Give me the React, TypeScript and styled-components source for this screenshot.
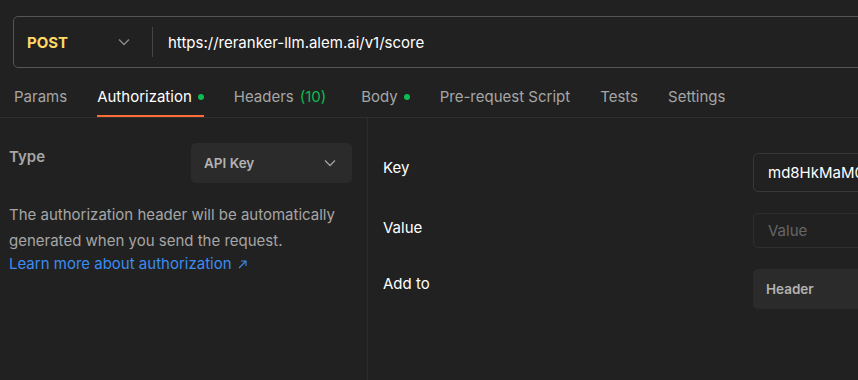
import React from "react";
import styled, { createGlobalStyle } from "styled-components";

const GlobalStyle = createGlobalStyle`
  html, body {
    margin: 0;
    padding: 0;
    background: #212121;
  }
  * {
    box-sizing: border-box;
  }
`;

const Page = styled.div`
  width: 858px;
  height: 380px;
  overflow: hidden;
  background: #212121;
  font-family: Inter, "Noto Sans", sans-serif;
  font-size: 15px;
  color: #f0f0f0;
  display: flex;
  flex-direction: column;
`;

const UrlBar = styled.div`
  margin: 16px -40px 0 13px;
  height: 52px;
  border: 1px solid #555555;
  border-radius: 5px;
  display: flex;
  align-items: center;
  flex-shrink: 0;
`;

const Method = styled.div`
  width: 138px;
  padding: 0 22px 0 13px;
  display: flex;
  align-items: center;
  justify-content: space-between;
  font-weight: 700;
  color: #ffd866;
`;

const Divider = styled.div`
  width: 1px;
  height: 30px;
  background: #454545;
`;

const UrlText = styled.div`
  padding-left: 15px;
  color: #ffffff;
  white-space: nowrap;
`;

const Chevron: React.FC<{ color?: string }> = ({ color = "#8c8c8c" }) => (
  <svg width="12" height="8" viewBox="0 0 12 8" fill="none">
    <path d="M1 1.5 L6 6.5 L11 1.5" stroke={color} strokeWidth="1.3" />
  </svg>
);

const TabBar = styled.div`
  display: flex;
  gap: 30px;
  padding-left: 14px;
  border-bottom: 1px solid #2f2f2f;
  flex-shrink: 0;
`;

const Tab = styled.div<{ $active?: boolean; $extra?: number }>`
  padding: 19px 0 8px;
  line-height: 20px;
  display: flex;
  align-items: center;
  gap: 6px;
  white-space: nowrap;
  color: ${(p) => (p.$active ? "#ffffff" : "#a6a6a6")};
  border-bottom: 2px solid ${(p) => (p.$active ? "#ff6c37" : "transparent")};
  margin-right: ${(p) => p.$extra ?? 0}px;
`;

const Count = styled.span`
  color: #0cbb52;
`;

const Dot = styled.span`
  width: 6px;
  height: 6px;
  border-radius: 50%;
  background: #0cbb52;
`;

const Body = styled.div`
  flex: 1;
  display: grid;
  grid-template-columns: 368px 1fr;
  min-height: 0;
`;

const LeftPane = styled.div`
  border-right: 1px solid #2c2c2c;
  padding: 25px 15px 0 9px;
`;

const TypeRow = styled.div`
  display: flex;
  justify-content: space-between;
  align-items: flex-start;
`;

const TypeLabel = styled.div`
  padding-top: 4px;
  font-weight: 600;
  color: #a6a6a6;
  line-height: 20px;
`;

const Select = styled.div<{ $width: number; $height?: number }>`
  width: ${(p) => p.$width}px;
  height: ${(p) => p.$height ?? 40}px;
  background: #2b2b2b;
  border-radius: 5px;
  padding: 0 16px 0 13px;
  display: flex;
  align-items: center;
  justify-content: space-between;
  font-size: 13.5px;
  font-weight: 600;
  color: #b3b3b3;
`;

const Description = styled.p`
  margin: 19px 0 0;
  line-height: 26px;
  color: #a6a6a6;
`;

const Link = styled.a`
  display: flex;
  align-items: center;
  gap: 6px;
  line-height: 20px;
  color: #3d8cf0;
  text-decoration: none;
`;

const RightPane = styled.div`
  padding: 35px 0 0 15px;
  display: grid;
  grid-template-columns: 370px 300px;
  grid-auto-rows: min-content;
  row-gap: 21px;
`;

const FieldLabel = styled.div`
  padding-top: 5px;
  line-height: 20px;
  color: #ffffff;
`;

const Input = styled.div<{ $height: number; $placeholder?: boolean }>`
  height: ${(p) => p.$height}px;
  border: 1px solid ${(p) => (p.$placeholder ? "#2e2e2e" : "#383838")};
  border-radius: 5px;
  padding: 0 14px;
  display: flex;
  align-items: center;
  white-space: nowrap;
  overflow: hidden;
  color: ${(p) => (p.$placeholder ? "#666666" : "#ffffff")};
`;

const ArrowUpRight = () => (
  <svg width="9" height="9" viewBox="0 0 9 9" fill="none">
    <path d="M1 8 L8 1 M3 1 H8 V6" stroke="#3d8cf0" strokeWidth="1.1" />
  </svg>
);

export default function App() {
  return (
    <>
      <GlobalStyle />
      <Page>
        <UrlBar>
          <Method>
            POST
            <Chevron />
          </Method>
          <Divider />
          <UrlText>https://reranker-llm.alem.ai/v1/score</UrlText>
        </UrlBar>

        <TabBar>
          <Tab>Params</Tab>
          <Tab $active>
            Authorization
            <Dot />
          </Tab>
          <Tab $extra={5}>
            Headers <Count>(10)</Count>
          </Tab>
          <Tab>
            Body
            <Dot />
          </Tab>
          <Tab>Pre-request Script</Tab>
          <Tab>Tests</Tab>
          <Tab>Settings</Tab>
        </TabBar>

        <Body>
          <LeftPane>
            <TypeRow>
              <TypeLabel>Type</TypeLabel>
              <Select $width={161}>
                API Key
                <Chevron color="#a0a0a0" />
              </Select>
            </TypeRow>
            <Description>
              The authorization header will be automatically generated when you
              send the request.
            </Description>
            <Link href="#">
              Learn more about authorization
              <ArrowUpRight />
            </Link>
          </LeftPane>

          <RightPane>
            <FieldLabel>Key</FieldLabel>
            <Input $height={39}>md8HkMaM0tQx7pLr2Vb</Input>
            <FieldLabel>Value</FieldLabel>
            <Input $height={35} $placeholder>
              Value
            </Input>
            <FieldLabel>Add to</FieldLabel>
            <Select $width={300}>Header</Select>
          </RightPane>
        </Body>
      </Page>
    </>
  );
}
